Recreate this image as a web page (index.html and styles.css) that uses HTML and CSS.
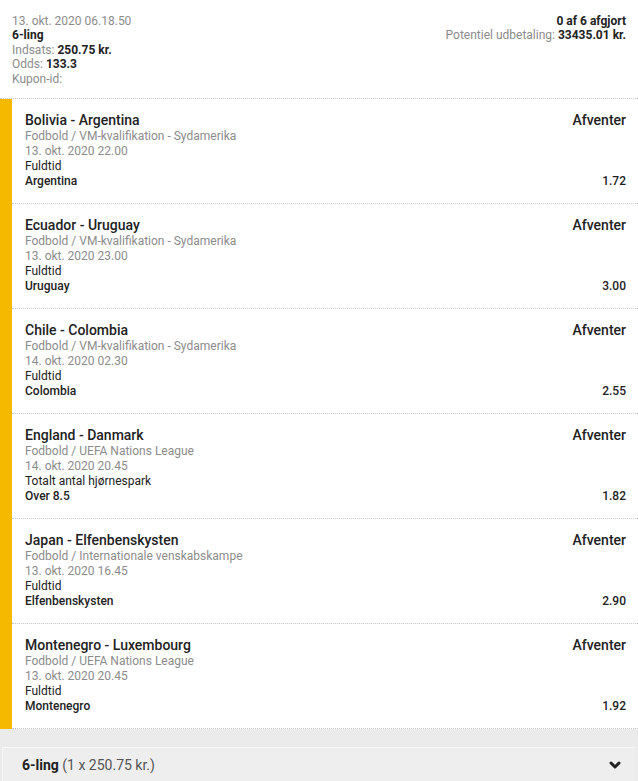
FILE: index.html
```html
<!DOCTYPE html>
<html lang="da">
<head>
<meta charset="utf-8">
<title>Kupon</title>
<link rel="stylesheet" href="styles.css">
</head>
<body>
<div class="coupon">
  <div class="head">
    <div class="head-left">
      <div class="muted">13. okt. 2020 06.18.50</div>
      <div class="strong">6-ling</div>
      <div class="muted">Indsats: <b class="dark">250.75 kr.</b></div>
      <div class="muted">Odds: <b class="dark">133.3</b></div>
      <div class="muted">Kupon-id:</div>
    </div>
    <div class="head-right">
      <div class="strong">0 af 6 afgjort</div>
      <div class="muted">Potentiel udbetaling: <b class="dark">33435.01 kr.</b></div>
    </div>
  </div>

  <div class="leg">
    <div class="stripe"></div>
    <div class="leg-body">
      <div class="row"><span class="title">Bolivia - Argentina</span><span class="status">Afventer</span></div>
      <div class="line muted">Fodbold / VM-kvalifikation - Sydamerika</div>
      <div class="line muted">13. okt. 2020 22.00</div>
      <div class="line dark">Fuldtid</div>
      <div class="row line"><span class="pick">Argentina</span><span class="pick">1.72</span></div>
    </div>
  </div>

  <div class="leg">
    <div class="stripe"></div>
    <div class="leg-body">
      <div class="row"><span class="title">Ecuador - Uruguay</span><span class="status">Afventer</span></div>
      <div class="line muted">Fodbold / VM-kvalifikation - Sydamerika</div>
      <div class="line muted">13. okt. 2020 23.00</div>
      <div class="line dark">Fuldtid</div>
      <div class="row line"><span class="pick">Uruguay</span><span class="pick">3.00</span></div>
    </div>
  </div>

  <div class="leg">
    <div class="stripe"></div>
    <div class="leg-body">
      <div class="row"><span class="title">Chile - Colombia</span><span class="status">Afventer</span></div>
      <div class="line muted">Fodbold / VM-kvalifikation - Sydamerika</div>
      <div class="line muted">14. okt. 2020 02.30</div>
      <div class="line dark">Fuldtid</div>
      <div class="row line"><span class="pick">Colombia</span><span class="pick">2.55</span></div>
    </div>
  </div>

  <div class="leg">
    <div class="stripe"></div>
    <div class="leg-body">
      <div class="row"><span class="title">England - Danmark</span><span class="status">Afventer</span></div>
      <div class="line muted">Fodbold / UEFA Nations League</div>
      <div class="line muted">14. okt. 2020 20.45</div>
      <div class="line dark">Totalt antal hjørnespark</div>
      <div class="row line"><span class="pick">Over 8.5</span><span class="pick">1.82</span></div>
    </div>
  </div>

  <div class="leg">
    <div class="stripe"></div>
    <div class="leg-body">
      <div class="row"><span class="title">Japan - Elfenbenskysten</span><span class="status">Afventer</span></div>
      <div class="line muted">Fodbold / Internationale venskabskampe</div>
      <div class="line muted">13. okt. 2020 16.45</div>
      <div class="line dark">Fuldtid</div>
      <div class="row line"><span class="pick">Elfenbenskysten</span><span class="pick">2.90</span></div>
    </div>
  </div>

  <div class="leg">
    <div class="stripe"></div>
    <div class="leg-body">
      <div class="row"><span class="title">Montenegro - Luxembourg</span><span class="status">Afventer</span></div>
      <div class="line muted">Fodbold / UEFA Nations League</div>
      <div class="line muted">13. okt. 2020 20.45</div>
      <div class="line dark">Fuldtid</div>
      <div class="row line"><span class="pick">Montenegro</span><span class="pick">1.92</span></div>
    </div>
  </div>

  <div class="foot">
    <div class="bar">
      <span><b class="bar-title">6-ling</b> <span class="bar-sub">(1 x 250.75 kr.)</span></span>
      <svg class="chev" width="12" height="9" viewBox="0 0 12 9"><polyline points="2,2 6,6 10,2" fill="none" stroke="#222" stroke-width="3" stroke-linecap="round" stroke-linejoin="round"/></svg>
    </div>
  </div>
</div>
</body>
</html>
```

FILE: styles.css
```css
html, body {
  margin: 0;
  padding: 0;
  background: #ffffff;
}
body {
  font-family: Roboto, "Liberation Sans", Arial, sans-serif;
  font-size: 12px;
  color: #222222;
}
.coupon {
  width: 638px;
  background: #ffffff;
}
.muted {
  color: #8c8c8c;
}
.dark {
  color: #222222;
}
b.dark, .strong {
  font-weight: 700;
  color: #222222;
}
.head {
  display: flex;
  justify-content: space-between;
  padding: 14px 12px 12px 12px;
  line-height: 14.4px;
  border-bottom: 1px dotted #c8c8c8;
}
.head-right {
  text-align: right;
}
.leg {
  display: flex;
}
.stripe {
  width: 12px;
  flex: none;
  background: #f5b900;
}
.leg-body {
  flex: 1;
  padding: 13px 12px 14px 13px;
  border-bottom: 1px dotted #c8c8c8;
}
.row {
  display: flex;
  justify-content: space-between;
  align-items: baseline;
}
.title, .status {
  font-size: 14px;
  line-height: 17px;
  font-weight: 500;
  color: #222222;
}
.line {
  line-height: 15px;
}
.pick {
  font-weight: 500;
  color: #222222;
}
.foot {
  background: #ebebeb;
  padding: 18px 3px 0 2px;
}
.bar {
  display: flex;
  justify-content: space-between;
  align-items: center;
  background: #eeeeee;
  border-top: 1px solid #f8f8f8;
  border-left: 1px solid #f4f4f4;
  padding: 9px 14px 12px 19px;
  font-size: 14px;
  line-height: 16px;
}
.bar-title {
  font-weight: 700;
  color: #222222;
}
.bar-sub {
  color: #555555;
}
.chev {
  display: block;
}
```
